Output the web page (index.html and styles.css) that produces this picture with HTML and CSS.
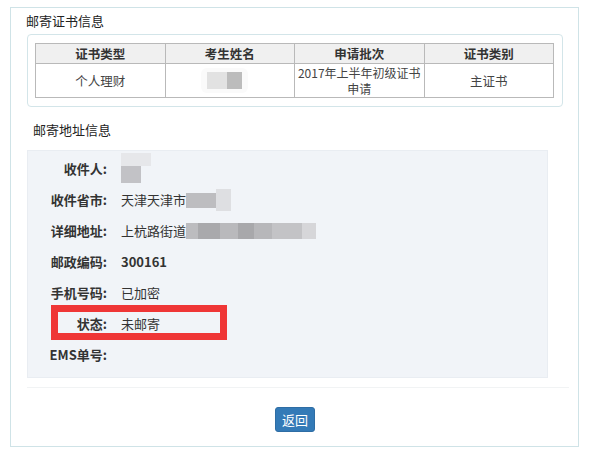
FILE: index.html
```html
<!DOCTYPE html>
<html lang="zh-CN">
<head>
<meta charset="utf-8">
<title>邮寄证书信息</title>
<link rel="stylesheet" href="styles.css">
</head>
<body>
<div class="panel">
  <div class="title">邮寄证书信息</div>
  <div class="table-box">
    <table class="cert">
      <thead>
        <tr><th>证书类型</th><th>考生姓名</th><th>申请批次</th><th>证书类别</th></tr>
      </thead>
      <tbody>
        <tr>
          <td>个人理财</td>
          <td><span class="blur name"><i class="b1"></i><i class="b2"></i></span></td>
          <td class="batch">2017年上半年初级证书<br>申请</td>
          <td>主证书</td>
        </tr>
      </tbody>
    </table>
  </div>
  <div class="subtitle">邮寄地址信息</div>
  <div class="addr">
    <div class="row"><span class="label">收件人:</span><span class="value"><span class="blur person"><i class="p1"></i><i class="p2"></i></span></span></div>
    <div class="row"><span class="label">收件省市:</span><span class="value">天津天津市<span class="blur city"><i class="c1"></i><i class="c2"></i></span></span></div>
    <div class="row"><span class="label">详细地址:</span><span class="value">上杭路街道<span class="blur street"><i class="s1"></i><i class="s2"></i><i class="s3"></i><i class="s4"></i><i class="s5"></i><i class="s6"></i><i class="s7"></i></span></span></div>
    <div class="row"><span class="label">邮政编码:</span><span class="value strong">300161</span></div>
    <div class="row"><span class="label">手机号码:</span><span class="value">已加密</span></div>
    <div class="row status"><span class="label">状态:</span><span class="value">未邮寄</span><span class="highlight"></span></div>
    <div class="row"><span class="label">EMS单号:</span><span class="value"></span></div>
  </div>
  <div class="footer">
    <button class="btn" type="button">返回</button>
  </div>
</div>
</body>
</html>
```

FILE: styles.css
```css
html, body {
  margin: 0;
  padding: 0;
  background: #fff;
}
body {
  font-family: "Noto Sans CJK SC", "Noto Sans", sans-serif;
  font-size: 13px;
  color: #333;
}
.panel {
  margin: 7px 0 0 10px;
  border: 1px solid #cfe3e7;
  padding: 0 15px 0 16px;
  box-sizing: border-box;
  width: 569px;
  height: 440px;
}
.title {
  height: 26px;
  line-height: 26px;
  margin-left: -1px;
  font-size: 13px;
  color: #222;
}
.table-box {
  border: 1px solid #d3e5e9;
  border-radius: 4px;
  padding: 8px 8px 8px 7px;
}
.cert {
  width: 519px;
  border-collapse: collapse;
  table-layout: fixed;
}
.cert th, .cert td {
  border: 1px solid #b9b9b9;
  text-align: center;
  padding: 0;
  font-size: 12.5px;
}
.cert th {
  height: 19px;
  line-height: 18px;
  background: #f0f0f0;
  font-weight: bold;
  color: #333;
}
.cert td {
  height: 33px;
  line-height: 17px;
  color: #444;
}
.cert td.batch {
  font-size: 12px;
  line-height: 16px;
}
.blur {
  display: inline-flex;
  vertical-align: middle;
}
.blur i {
  display: block;
}
.name {
  padding: 4px 6px;
  background: #fafafa;
  border-radius: 6px;
  margin-left: -10px;
}
.name .b1 { width: 20px; height: 17px; background: #e2e2e2; }
.name .b2 { width: 15px; height: 17px; background: #bcbcbc; }

.subtitle {
  padding: 12px 0 0 6px;
  line-height: 22px;
  height: 22px;
  margin-bottom: 9px;
  color: #222;
}
.addr {
  width: 521px;
  height: 228px;
  box-sizing: border-box;
  background: #f1f4f8;
  border: 1px solid #e9edf2;
  padding: 2px 0 8px 0;
  position: relative;
}
.row {
  display: flex;
  align-items: center;
  height: 31px;
  position: relative;
}
.label {
  width: 79px;
  text-align: right;
  font-weight: bold;
  color: #333;
  flex: none;
}
.value {
  margin-left: 14px;
  color: #333;
  display: flex;
  align-items: center;
}
.value.strong {
  font-weight: bold;
}
.person {
  flex-direction: column;
  margin-top: -2px;
}
.person .p1 { width: 30px; height: 13px; background: #e6e7ea; }
.person .p2 { width: 20px; height: 17px; background: #c2c2c6; }
.city .c1 { width: 30px; height: 15px; background: #bdbdc0; margin-top: 4px; }
.city .c2 { width: 15px; height: 22px; background: #dedfe2; }
.street .s1 { width: 12px; height: 16px; background: #bcbcbf; }
.street .s2 { width: 22px; height: 16px; background: #a9a9ac; }
.street .s3 { width: 18px; height: 16px; background: #b9b9bc; }
.street .s4 { width: 16px; height: 16px; background: #a8a8ab; }
.street .s5 { width: 18px; height: 16px; background: #b7b7ba; }
.street .s6 { width: 30px; height: 16px; background: #c3c3c6; }
.street .s7 { width: 14px; height: 16px; background: #d6d6d9; }
.highlight {
  position: absolute;
  left: 23px;
  top: -3px;
  width: 162px;
  height: 21px;
  border: 7px solid #ef3636;
}
.footer {
  margin-top: 9px;
  border-top: 1px solid #f1f3f4;
  margin-right: -6px;
  padding-top: 19px;
  text-align: center;
}
.btn {
  display: inline-block;
  height: 25px;
  padding: 0 6px;
  margin-left: -6px;
  border: 1px solid #2e6da4;
  border-radius: 3px;
  background: #337ab7;
  color: #fff;
  font-family: "Noto Sans CJK SC", sans-serif;
  font-size: 13px;
  line-height: 22px;
}
```
